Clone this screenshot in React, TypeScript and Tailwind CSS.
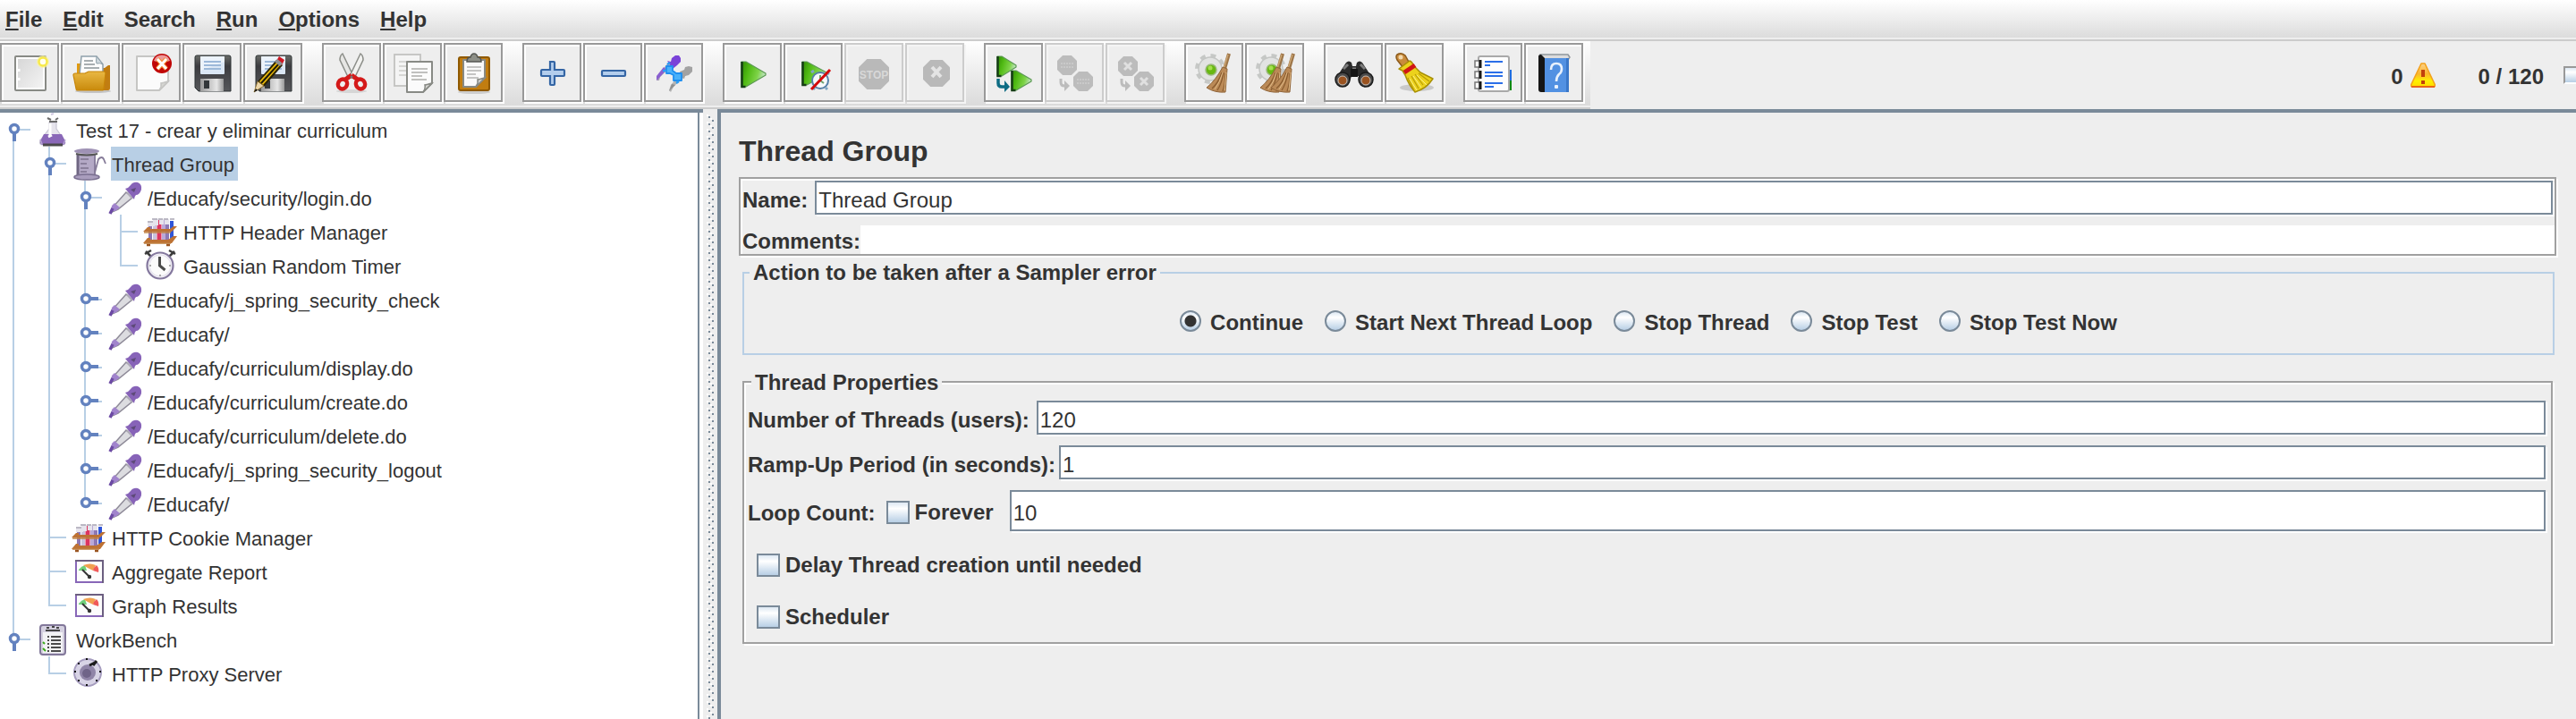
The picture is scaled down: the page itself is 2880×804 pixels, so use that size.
import React, { useState } from "react";

type Draw = () => React.ReactElement;

/* ---------- toolbar drawings, all on a 48 x 48 field ---------- */

function Page({ x, y, w, h, stroke = "#888a85", fill = "#fbfbfb" }: { x: number; y: number; w: number; h: number; stroke?: string; fill?: string }) {
  const r = x + w;
  const b = y + h;
  return (
    <g>
      <path d={`M${x} ${y}H${r}V${b - 10}L${r - 10} ${b}H${x}Z`} fill={fill} stroke={stroke} strokeWidth="2" strokeLinejoin="round" />
      <path d={`M${r} ${b - 10}Q${r - 7} ${b - 8} ${r - 8} ${b - 8}Q${r - 7} ${b - 4} ${r - 10} ${b}Z`} fill="#d6d6d2" stroke={stroke} strokeWidth="1.5" />
    </g>
  );
}

const NewIcon: Draw = () => (
  <g>
    <defs>
      <linearGradient id="paperGray" x1="0" y1="0" x2="1" y2="1">
        <stop offset="0" stopColor="#d4d4d4" />
        <stop offset="1" stopColor="#f6f6f6" />
      </linearGradient>
    </defs>
    <rect x="8" y="6" width="34" height="38" rx="1" fill="url(#paperGray)" stroke="#888a85" strokeWidth="2" />
    <path d="M10 8H40V42H10Z" fill="none" stroke="#fff" strokeWidth="2" />
    <path d="M12 20v3M12 30v3" stroke="#fff" strokeWidth="3" />
    <circle cx="39" cy="12" r="7" fill="#fbf4a0" opacity=".7" />
    <circle cx="39" cy="12" r="4.5" fill="#fffef0" stroke="#f7e94a" strokeWidth="2.5" />
  </g>
);

const OpenIcon: Draw = () => (
  <g>
    <defs>
      <linearGradient id="folderFront" x1="0" y1="0" x2="0" y2="1">
        <stop offset="0" stopColor="#e9b843" />
        <stop offset="1" stopColor="#c98a0c" />
      </linearGradient>
    </defs>
    <ellipse cx="27" cy="45" rx="20" ry="2" fill="#c4c4c4" />
    <path d="M9 14h5v5h26l4-3h2v26q0 2-2 2H10Z" fill="#c17d11" />
    <path d="M9 14h6v12H9z" fill="#e09a10" />
    <path d="M14 6H31L38 15V26H12Z" fill="#fcfcfc" stroke="#8fa0aa" strokeWidth="1.5" />
    <path d="M31 6q-1 6 0 8 4-1 7 1Z" fill="#cfd8de" stroke="#8fa0aa" />
    <path d="M17 11h10M17 15h12M17 19h17" stroke="#8c9498" strokeWidth="1.5" />
    <path d="M5 27q0-2 2-2h11l4-2h17q2 0 2 2l-2 17q0 2-2 2H10q-2 0-2-2Z" fill="url(#folderFront)" stroke="#c78509" strokeWidth="1.2" />
  </g>
);

const CloseIcon: Draw = () => (
  <g>
    <Page x={8} y={6} w={35} h={38} stroke="#c6c6c4" />
    <circle cx="36" cy="14" r="11" fill="#c00707" />
    <path d="M27 11a9.500 9.500 0 0 1 18 0q-9 3-18 0Z" fill="#ec9a9a" />
    <path d="M31 9l10 11M41 9L31 20" stroke="#f58a2c" strokeWidth="5" />
    <path d="M31 9l10 11M41 9L31 20" stroke="#fff" strokeWidth="3" />
  </g>
);

function Disk() {
  return (
    <g>
      <defs>
        <linearGradient id="diskBody" x1="0" y1="0" x2="0" y2="1">
          <stop offset="0" stopColor="#6a6c68" />
          <stop offset="0.300" stopColor="#3c3c40" />
          <stop offset="1" stopColor="#56575a" />
        </linearGradient>
        <linearGradient id="diskSlide" x1="0" y1="0" x2="1" y2="0">
          <stop offset="0" stopColor="#9a9a9a" />
          <stop offset="0.700" stopColor="#e6e6e6" />
          <stop offset="1" stopColor="#999" />
        </linearGradient>
      </defs>
      <path d="M7 5H43q2 0 2 2V45H9L5 41V7Q5 5 7 5Z" fill="url(#diskBody)" stroke="#2e3436" strokeWidth="1" />
      <rect x="11" y="6" width="27" height="20" rx="1" fill="#dbe7f5" />
      <path d="M11 6h27v6L11 22Z" fill="#f4f8fd" opacity=".7" />
      <path d="M15 12h19M15 16h19M15 20h19" stroke="#9db9d9" strokeWidth="1.800" />
      <rect x="11" y="31" width="26" height="14" fill="url(#diskSlide)" />
      <rect x="15" y="33" width="6" height="9" fill="#33373a" />
    </g>
  );
}

const SaveIcon: Draw = () => <Disk />;

const SaveAsIcon: Draw = () => (
  <g>
    <Disk />
    <path d="M7 34L28 10l7 6L14 40Z" fill="#2b2200" />
    <path d="M9 34L29 12l4 3L13 38Z" fill="#e9b90c" />
    <path d="M11 36L31 14" stroke="#1d1a08" strokeWidth="2" />
    <path d="M28 11l3-5 6 4-3 6Z" fill="#cf1722" />
    <path d="M26 12l3-3 6 5-3 3Z" fill="#8e9092" />
    <path d="M7 34l7 5-11 7Z" fill="#ecd6a8" stroke="#8a6a24" strokeWidth=".8" />
    <path d="M3 46l2-4 2 2Z" fill="#111" />
  </g>
);

const CutIcon: Draw = () => (
  <g>
    <ellipse cx="24" cy="45" rx="17" ry="2" fill="#d6d6d6" />
    <path d="M14 3q-3 2-3 7l10 21 5-3Z" fill="#e6e6e4" stroke="#8b8d88" strokeWidth="1.500" />
    <path d="M34 3q3 2 3 7L27 31l-5-3Z" fill="#f2f2f0" stroke="#8b8d88" strokeWidth="1.500" />
    <path d="M24 27l-7 5M24 27l7 5" stroke="#d41a1a" strokeWidth="5" />
    <ellipse cx="14" cy="37" rx="5" ry="5.500" fill="#eee" stroke="#d41a1a" strokeWidth="4.500" transform="rotate(25 14 37)" />
    <ellipse cx="34" cy="37" rx="5" ry="5.500" fill="#eee" stroke="#d41a1a" strokeWidth="4.500" transform="rotate(-25 34 37)" />
    <circle cx="24" cy="29" r="1.500" fill="#777" />
  </g>
);

const CopyIcon: Draw = () => (
  <g>
    <rect x="4" y="4" width="29" height="35" fill="#f4f4f4" stroke="#c2c2c0" strokeWidth="1.800" />
    <path d="M9 12h18M9 17h18M9 22h10M9 27h8" stroke="#d6d6d4" strokeWidth="1.800" />
    <Page x={18} y={12} w={28} h={34} />
    <path d="M23 20h18M23 24h18M23 28h12M23 32h17" stroke="#c0c0be" strokeWidth="1.800" />
  </g>
);

const PasteIcon: Draw = () => (
  <g>
    <ellipse cx="25" cy="46" rx="18" ry="2" fill="#cdcdcd" />
    <rect x="8" y="7" width="34" height="37" rx="2" fill="#c17d11" stroke="#8f5902" strokeWidth="2" />
    <Page x={13} y={10} w={24} h={30} fill="#fafafa" />
    <path d="M17 18h16M17 22h16M17 26h10M17 30h13" stroke="#b4b4b2" strokeWidth="1.600" />
    <path d="M17 12q0-5 4-5 1-4 4-4t4 4q4 0 4 5Z" fill="#8d8f87" stroke="#555753" strokeWidth="1.500" />
  </g>
);

const PlusIcon: Draw = () => (
  <path d="M22 12h4q1 0 1 1v8h10q1 0 1 1v5q0 1-1 1H27v9q0 1-1 1h-3q-1 0-1-1v-9H13q-1 0-1-1v-4q0-2 1-2h9Z" fill="#b3cdec" stroke="#3465a4" strokeWidth="2.200" />
);

const MinusIcon: Draw = () => <rect x="12" y="22" width="26" height="6" rx="1" fill="#b3cdec" stroke="#3465a4" strokeWidth="2.200" />;

const ToggleIcon: Draw = () => (
  <g>
    <path d="M6 28L19 12l4 4L9 29 8 33H5Z" fill="#a9a3b4" />
    <path d="M5 33V28l8-10 3 3-8 9Z" fill="#8a5fd0" />
    <path d="M17 11l4 1 1-4 4-3h4l2 3v4l-4 4-5 4Z" fill="#7a42d8" />
    <path d="M21 38L34 23l4 4L24 40l-3 6-2-2Z" fill="#b4b4b4" />
    <path d="M19 45l3-8 4 1Z" fill="#8f8f8f" />
    <path d="M31 23l5-2 1-3 4-1 4 1v5l-4 4-4 1-1 3-3-1Z" fill="#a2a2a2" />
    <path d="M16 17h7v5l4 3h6v8h-9v-6l-4-2h-4Z" fill="#49b1fa" stroke="#1f8ff0" strokeWidth="1.800" strokeLinejoin="round" />
    <path d="M12 22h4M17 15l3-2M30 34l-3 2" stroke="#2a9df5" strokeWidth="2.500" />
  </g>
);

function Triangle({ x, y, w, h }: { x: number; y: number; w: number; h: number }) {
  return (
    <g>
      <defs>
        <linearGradient id="playGreen" x1="0" y1="0" x2="1" y2="0.300">
          <stop offset="0" stopColor="#2f8a06" />
          <stop offset="0.350" stopColor="#4fb913" />
          <stop offset="0.750" stopColor="#7ed348" />
          <stop offset="1" stopColor="#b9e2b4" />
        </linearGradient>
      </defs>
      <path d={`M${x + 1} ${y + 1}H${x + 6}L${x + w} ${y + h / 2 - 1}V${y + h / 2 + 1}L${x + 6} ${y + h - 1}H${x + 1}Z`} fill="url(#playGreen)" stroke="#5c9a54" strokeWidth="1.200" strokeLinejoin="round" />
      <path d={`M${x + 1.500} ${y + 1}V${y + h - 1}h4`} fill="none" stroke="#163d16" strokeWidth="2.500" />
    </g>
  );
}

const StartIcon: Draw = () => <Triangle x={11} y={11} w={28} h={30} />;

const StartNoTimersIcon: Draw = () => (
  <g>
    <Triangle x={11} y={11} w={28} h={28} />
    <circle cx="32" cy="33" r="9" fill="#f6f9fb" stroke="#5580a8" strokeWidth="2" />
    <path d="M22 24l3-2M39 24l3 2M26 41l-2 2M38 41l2 2" stroke="#7fa6c4" strokeWidth="3" />
    <path d="M32 27v6l4 3" fill="none" stroke="#6ea06e" strokeWidth="2" />
    <path d="M22 43L43 21" stroke="#d40a0a" strokeWidth="3" />
  </g>
);

const octagon = (cx: number, cy: number, r: number) => {
  const k = r * 0.45;
  return `M${cx - k} ${cy - r}H${cx + k}L${cx + r} ${cy - k}V${cy + k}L${cx + k} ${cy + r}H${cx - k}L${cx - r} ${cy + k}V${cy - k}Z`;
};

const StopIcon: Draw = () => (
  <g>
    <path d={octagon(24, 26, 17)} fill="#b9b9b9" />
    <text x="24" y="31" textAnchor="middle" fontFamily="Liberation Sans, sans-serif" fontSize="12" fill="#d8d8d8">STOP</text>
  </g>
);

const ShutdownIcon: Draw = () => (
  <g>
    <path d={octagon(26, 25, 15)} fill="#b9b9b9" />
    <path d="M21 18l10 11M31 18L21 29" stroke="#e4e4e4" strokeWidth="4" />
  </g>
);

const StartAllIcon: Draw = () => (
  <g>
    <Triangle x={5} y={5} w={22} h={24} />
    <Triangle x={21} y={21} w={23} h={24} />
    <path d="M7 31v5q0 4 4 4h4" fill="none" stroke="#0e6c84" strokeWidth="3.500" />
    <path d="M14 33l6 7-6 6Z" fill="#0e6c84" />
  </g>
);

const GrayArrow = () => (
  <g>
    <path d="M9 31v4q0 4 4 4h2" fill="none" stroke="#bcbcbc" strokeWidth="3" />
    <path d="M13 33l6 6-6 6Z" fill="#bcbcbc" />
  </g>
);

const StopAllIcon: Draw = () => (
  <g>
    <path d={octagon(16, 16, 11)} fill="#bcbcbc" />
    <path d={octagon(34, 34, 11)} fill="#bcbcbc" />
    <path d="M9 14h14M9 18h14M27 32h14M27 36h14" stroke="#c9c9c9" strokeWidth="2" strokeDasharray="2 1" />
    <GrayArrow />
  </g>
);

const ShutdownAllIcon: Draw = () => (
  <g>
    <path d={octagon(16, 17, 11)} fill="#bcbcbc" />
    <path d={octagon(34, 34, 11)} fill="#bcbcbc" />
    <path d="M12 13l8 8M20 13l-8 8M30 30l8 8M38 30l-8 8" stroke="#e0e0e0" strokeWidth="3" />
    <GrayArrow />
  </g>
);

const Gear = () => (
  <g>
    <circle cx="20" cy="20" r="14" fill="none" stroke="#c6c8c6" strokeWidth="6" strokeDasharray="5.500 5.500" />
    <circle cx="20" cy="20" r="13" fill="#e2e3e2" stroke="#c4c6c4" strokeWidth="1.500" />
    <circle cx="21" cy="21" r="6" fill="#68b812" stroke="#9bb87c" strokeWidth="1.500" />
    <circle cx="20" cy="19" r="2.500" fill="#a5e04e" />
  </g>
);

function StrawBroom({ dx }: { dx: number }) {
  return (
    <g transform={`translate(${dx} 0)`}>
      <path d="M41 3L36 20" stroke="#9c7447" strokeWidth="4" />
      <path d="M40 4L35 20" stroke="#caa472" strokeWidth="1.500" />
      <path d="M34 18l5 2-2 26q-12 1-21-5 10-8 18-23Z" fill="#bb8a57" stroke="#8f6439" strokeWidth="1" />
      <path d="M33 24q-4 12-11 18M35 24q-2 12-7 20M37 25q0 12-3 20" fill="none" stroke="#8a5c2f" strokeWidth="1.300" />
      <path d="M34 24q-3 11-9 19M38 24q-1 10-2 20" fill="none" stroke="#e0bb88" strokeWidth="1" />
    </g>
  );
}

const ClearIcon: Draw = () => (
  <g>
    <Gear />
    <StrawBroom dx={0} />
  </g>
);

const ClearAllIcon: Draw = () => (
  <g>
    <Gear />
    <StrawBroom dx={-8} />
    <StrawBroom dx={4} />
  </g>
);

const SearchIcon: Draw = () => (
  <g>
    <path d="M16 13q3-3 6 0l1 4h4l1-4q3-3 6 0l6 9 6 11q0 6-6 6t-8-5l-2-6h-8l-2 6q-2 5-8 5t-8-6l6-11Z" fill="#2c2c2c" />
    <path d="M13 20l5-5M37 20l-5-5M23 20h4" stroke="#7c7c7c" strokeWidth="3" />
    <circle cx="12" cy="32" r="8" fill="#4a4a4a" stroke="#1a1a1a" strokeWidth="1.500" />
    <circle cx="38" cy="32" r="8" fill="#4a4a4a" stroke="#1a1a1a" strokeWidth="1.500" />
    <circle cx="12" cy="33" r="5" fill="#9a5320" stroke="#c9c0b8" strokeWidth="1" />
    <circle cx="38" cy="33" r="5" fill="#9a5320" stroke="#c9c0b8" strokeWidth="1" />
    <rect x="21" y="20" width="8" height="9" fill="#161616" />
  </g>
);

const ResetSearchIcon: Draw = () => (
  <g>
    <ellipse cx="27" cy="41" rx="19" ry="4" fill="#c9c9c9" />
    <path d="M5 4q5-3 9 1l5 9-7 5L5 10q-2-4 0-6Z" fill="#c98b3c" stroke="#8b5a1c" strokeWidth="1.500" />
    <circle cx="9" cy="7" r="2.500" fill="#f2d9ae" />
    <path d="M7 20L19 11q3 1 4 5l8 8 14 7Q38 42 25 46 18 38 14 27l-3-5Z" fill="#ecd21c" stroke="#a89005" strokeWidth="1.500" strokeLinejoin="round" />
    <path d="M17 30l7 14M21 28l8 14M25 26l9 12M29 25l12 9" stroke="#b89c08" strokeWidth="1.200" />
    <path d="M19 31l8 13M23 28l9 13M27 27l11 11" stroke="#fbf08a" strokeWidth="1" />
    <path d="M13 24L25 16" stroke="#d01616" strokeWidth="5" />
  </g>
);

const FunctionHelperIcon: Draw = () => (
  <g>
    <rect x="39" y="21" width="6" height="12" fill="#1f6ee0" />
    <rect x="39" y="33" width="6" height="11" fill="#0f8a12" />
    <rect x="8" y="6" width="34" height="39" rx="2" fill="#fdfdfd" stroke="#a9a9a9" strokeWidth="2" />
    <path d="M4 11h5v7H4zM4 23h5v7H4zM4 35h5v7H4z" fill="#fff" stroke="#777" strokeWidth="1.500" />
    <path d="M10 10v9M10 22v9M10 34v9" stroke="#1a1a1a" strokeWidth="3" />
    <path d="M15 12h20M15 24h20M15 28h20M15 36h20" stroke="#2a6ee8" strokeWidth="2.200" />
    <path d="M15 16h6M15 40h10" stroke="#2a6ee8" strokeWidth="2" />
  </g>
);

const HelpIcon: Draw = () => (
  <g>
    <path d="M9 4H40l2 3-2 3H9Z" fill="#dcdcdc" stroke="#8f969c" strokeWidth="1.500" />
    <rect x="14" y="8" width="27" height="38" fill="#5291e2" />
    <rect x="38" y="8" width="3" height="38" fill="#3a77c8" />
    <path d="M7 6q0-2 3-2l4 4v38H10q-3 0-3-3Z" fill="#161616" />
    <path d="M21 21q0-7 6-7t6 6q0 4-3 6-3 3-3 8" fill="none" stroke="#e8f1fc" strokeWidth="2.600" />
    <rect x="25" y="38" width="4" height="4" rx="1" fill="#e8f1fc" />
  </g>
);

const toolGroups: { name: string; draw: Draw; disabled?: boolean }[][] = [
  [
    { name: "New", draw: NewIcon },
    { name: "Open", draw: OpenIcon },
    { name: "Close", draw: CloseIcon },
    { name: "Save", draw: SaveIcon },
    { name: "Save as", draw: SaveAsIcon },
  ],
  [
    { name: "Cut", draw: CutIcon },
    { name: "Copy", draw: CopyIcon },
    { name: "Paste", draw: PasteIcon },
  ],
  [
    { name: "Expand all", draw: PlusIcon },
    { name: "Collapse all", draw: MinusIcon },
    { name: "Toggle", draw: ToggleIcon },
  ],
  [
    { name: "Start", draw: StartIcon },
    { name: "Start no pauses", draw: StartNoTimersIcon },
    { name: "Stop", draw: StopIcon, disabled: true },
    { name: "Shutdown", draw: ShutdownIcon, disabled: true },
  ],
  [
    { name: "Remote start all", draw: StartAllIcon },
    { name: "Remote stop all", draw: StopAllIcon, disabled: true },
    { name: "Remote shutdown all", draw: ShutdownAllIcon, disabled: true },
  ],
  [
    { name: "Clear", draw: ClearIcon },
    { name: "Clear all", draw: ClearAllIcon },
  ],
  [
    { name: "Find", draw: SearchIcon },
    { name: "Reset search", draw: ResetSearchIcon },
  ],
  [
    { name: "Function helper", draw: FunctionHelperIcon },
    { name: "Help", draw: HelpIcon },
  ],
];

/* ---------- tree drawings, all on a 40 x 38 field ---------- */

const Flask: Draw = () => (
  <g>
    <path d="M17 2l3-1" stroke="#cfc8e0" strokeWidth="2" />
    <path d="M15 11h8v7l9 13q2 5-2 5H8q-5 0-3-5l10-13Z" fill="#e6e4ec" stroke="#c9c6d4" strokeWidth="1.200" />
    <path d="M9 24h20l4 8q1 3-3 4H8q-4-1-3-4Z" fill="#8a68b8" />
    <path d="M16 12v14M18 25l-4 2" stroke="#fff" strokeWidth="3" />
    <path d="M8 36h22" stroke="#4a4a4a" strokeWidth="3" />
    <path d="M13 6l4 2M25 6l-3 2M15 10h9" stroke="#6a6a6a" strokeWidth="2" />
    <path d="M5 30l2 5M33 30l-2 5" stroke="#b4a4d0" strokeWidth="1.500" />
  </g>
);

const Spool: Draw = () => (
  <g>
    <rect x="6" y="8" width="20" height="25" fill="#b4a9c6" />
    <path d="M7 9v23" stroke="#6f6682" strokeWidth="3" />
    <path d="M10 14h9M10 19h7M10 24h9M10 28h7" stroke="#7d738f" strokeWidth="1.500" />
    <path d="M26 9v23" stroke="#8a7f9e" strokeWidth="2" />
    <ellipse cx="17" cy="5" rx="14" ry="3" fill="#9f92b5" />
    <path d="M5 8q12 3 24 0" fill="none" stroke="#555" strokeWidth="2" />
    <ellipse cx="17" cy="34" rx="14" ry="3" fill="#a99dbd" stroke="#7a6f90" strokeWidth="1.500" />
    <path d="M26 29l4-15q4-4 6 0l2 5" fill="none" stroke="#857a98" strokeWidth="1.800" />
  </g>
);

const Pipette: Draw = () => (
  <g>
    <path d="M5 31L21 13l7 6L12 32l-7 3Z" fill="#dcdce0" stroke="#8e8a98" strokeWidth="1.500" />
    <path d="M4 34l1-6 3-3 6 5-5 4Z" fill="#a184cc" />
    <path d="M3 37l3-6" stroke="#6c4aa4" strokeWidth="3.500" />
    <path d="M22 13l6 7" stroke="#aeaab8" strokeWidth="2" />
    <path d="M20 9q4-1 6-4 3-4 8-3 5 2 4 8-2 6-6 6-2 2-2 5l-4-5Z" fill="#8763b8" />
    <path d="M26 10l6-2-2 5Z" fill="#5d4a78" />
  </g>
);

const Rack: Draw = () => (
  <g>
    <path d="M8 8v21" stroke="#8d78b4" strokeWidth="4" />
    <path d="M13 7v21" stroke="#c9c2dc" strokeWidth="4" />
    <path d="M18 6v23" stroke="#dc3560" strokeWidth="5" />
    <path d="M23 6v22" stroke="#b9a9d8" strokeWidth="4" />
    <path d="M27 7v21" stroke="#8d78b4" strokeWidth="4" />
    <path d="M32 7v20" stroke="#2f55d8" strokeWidth="4" />
    <path d="M5 8h8v5H5zM11 5h6v7h-6zM18 5h5v6h-5zM24 5h5v6h-5z" fill="#e6e4ec" />
    <path d="M5 8h6M10 5h6M17 5h5M23 5h5M30 5h5" stroke="#a9a5b4" strokeWidth="1.500" />
    <path d="M0 19l5-5h3v2h22l4-3h4l-6 6Z" fill="#bd7234" />
    <path d="M0 32l5-6h3v2h20l6-4h4l-6 8Z" fill="#bd7234" />
    <path d="M1 20h30M1 32h30" stroke="#c08040" strokeWidth="1.500" />
    <path d="M4 34h4M26 34h4" stroke="#9a5520" strokeWidth="2.500" />
  </g>
);

const Clock: Draw = () => (
  <g>
    <path d="M2 6l7-4M3 3l7 7M36 6l-7-4M35 3l-7 7" stroke="#3c3c3c" strokeWidth="2.500" />
    <circle cx="19" cy="19" r="14.500" fill="#fbfbfb" stroke="#84789e" strokeWidth="2.200" />
    <circle cx="19" cy="19" r="12" fill="none" stroke="#e6e3ee" strokeWidth="1.500" />
    <path d="M18.500 9v10l6 5" fill="none" stroke="#4a4a4a" strokeWidth="3" />
    <path d="M19 31v-2M7 19h2M31 19h-2" stroke="#aaa" strokeWidth="2" />
  </g>
);

const Gauge: Draw = () => (
  <g>
    <rect x="5" y="7" width="30" height="24" fill="#fcfcfc" stroke="#8867b8" strokeWidth="2" />
    <path d="M4 7h32M35 6v26" stroke="#6c5f80" strokeWidth="2" />
    <path d="M8 17q3-4 7-5l2 6H8Z" fill="#6fcf7a" />
    <path d="M13 12q8-3 14 0l-3 6-6-3Z" fill="#f1a050" />
    <path d="M25 15l3-3q3 3 2 8l-6-2Z" fill="#f05a5a" />
    <path d="M12 17l8 8" stroke="#333" strokeWidth="2" />
    <circle cx="20" cy="25" r="2.200" fill="#333" />
  </g>
);

const Bench: Draw = () => (
  <g>
    <rect x="5" y="3" width="28" height="33" rx="3" fill="#d5d1e0" stroke="#82789a" strokeWidth="2" />
    <path d="M8 11h22v23H8Z" fill="#f3f3f5" />
    <path d="M12 6h3M18 5h3M23 6h3M11 9h16" stroke="#444" strokeWidth="2.200" />
    <path d="M13 16h15M13 20h15M13 24h15M13 28h15M13 32h15" stroke="#4a4a4a" strokeWidth="1.800" strokeDasharray="2 2 12 2" />
    <path d="M8 22l2 2M8 29l3 3" stroke="#3cab1c" strokeWidth="2" />
  </g>
);

const Proxy: Draw = () => (
  <g>
    <circle cx="18" cy="18" r="15" fill="#d8d4e6" stroke="#a59cbe" strokeWidth="2" />
    <circle cx="18" cy="18" r="9" fill="#9085a8" />
    <circle cx="17" cy="19" r="5" fill="#6f6488" />
    <path d="M20 10l8-4M24 10l4-5" stroke="#1c1c1c" strokeWidth="3" />
    <path d="M16 3h2M3 17h2M31 17h2M16 32h2M7 8h2M7 27h2M27 27h2" stroke="#111" strokeWidth="2.200" />
  </g>
);

type Guide = "none" | "line" | "tee" | "end" | "openFirst" | "open" | "openLast" | "closed" | "closedLast";

function GuideCell({ kind }: { kind: Guide }) {
  const up = kind !== "none" && kind !== "openFirst";
  const down = kind === "line" || kind === "tee" || kind === "open" || kind === "openFirst" || kind === "closed";
  const across = kind !== "none" && kind !== "line";
  const open = kind === "open" || kind === "openFirst" || kind === "openLast";
  const closed = kind === "closed" || kind === "closedLast";
  const art = (
    <svg className="block h-[38px] w-10" viewBox="0 0 40 38" aria-hidden="true">
      {up && <rect x="14" y="0" width="2" height="20" fill="#b8cfe5" />}
      {down && <rect x="14" y="18" width="2" height="20" fill="#b8cfe5" />}
      {across && <rect x="15" y="18" width="19" height="2" fill="#b8cfe5" />}
      {open && <rect x="14" y="22" width="4" height="10" fill="#6382bf" />}
      {closed && <rect x="20" y="16" width="10" height="4" fill="#6382bf" />}
      {(open || closed) && <circle cx="16" cy="18" r="4.500" fill="#fff" stroke="#6382bf" strokeWidth="3.500" />}
    </svg>
  );
  if (open || closed) {
    return (
      <button type="button" aria-label={open ? "Collapse" : "Expand"} className="shrink-0">
        {art}
      </button>
    );
  }
  return <span className="shrink-0">{art}</span>;
}

const treeRows: { text: string; icon: Draw; guides: Guide[] }[] = [
  { text: "Test 17 - crear y eliminar curriculum", icon: Flask, guides: ["openFirst"] },
  { text: "Thread Group", icon: Spool, guides: ["line", "open"] },
  { text: "/Educafy/security/login.do", icon: Pipette, guides: ["line", "line", "open"] },
  { text: "HTTP Header Manager", icon: Rack, guides: ["line", "line", "line", "tee"] },
  { text: "Gaussian Random Timer", icon: Clock, guides: ["line", "line", "line", "end"] },
  { text: "/Educafy/j_spring_security_check", icon: Pipette, guides: ["line", "line", "closed"] },
  { text: "/Educafy/", icon: Pipette, guides: ["line", "line", "closed"] },
  { text: "/Educafy/curriculum/display.do", icon: Pipette, guides: ["line", "line", "closed"] },
  { text: "/Educafy/curriculum/create.do", icon: Pipette, guides: ["line", "line", "closed"] },
  { text: "/Educafy/curriculum/delete.do", icon: Pipette, guides: ["line", "line", "closed"] },
  { text: "/Educafy/j_spring_security_logout", icon: Pipette, guides: ["line", "line", "closed"] },
  { text: "/Educafy/", icon: Pipette, guides: ["line", "line", "closedLast"] },
  { text: "HTTP Cookie Manager", icon: Rack, guides: ["line", "tee"] },
  { text: "Aggregate Report", icon: Gauge, guides: ["line", "tee"] },
  { text: "Graph Results", icon: Gauge, guides: ["line", "end"] },
  { text: "WorkBench", icon: Bench, guides: ["openLast"] },
  { text: "HTTP Proxy Server", icon: Proxy, guides: ["none", "end"] },
];

const menus: [string, string][] = [
  ["F", "ile"],
  ["E", "dit"],
  ["", "Search"],
  ["R", "un"],
  ["O", "ptions"],
  ["H", "elp"],
];

const etched = "border-2 border-[#a0a0a0] shadow-[2px_2px_0_0_#fff,inset_2px_2px_0_0_#fff]";
const field = "min-w-0 flex-1 border-2 border-[#7a8a99] bg-white pl-0.5 pt-1.5 text-2xl leading-7 font-normal text-[#333] shadow-[2px_2px_0_0_#fff] outline-none";
const tick = "size-[26px] shrink-0 appearance-none border-2 border-[#7a8a99] bg-linear-to-b from-[#dde8f3] via-white via-30% to-[#b8cfe5]";
const round =
  "size-6 shrink-0 appearance-none rounded-full border-2 border-[#7a8a99] bg-linear-to-b from-[#dde8f3] via-white via-30% to-[#b8cfe5] checked:bg-[radial-gradient(circle,#333_0_6px,transparent_7px),linear-gradient(#dde8f3,#fff_30%,#b8cfe5)]";

const actions = ["Continue", "Start Next Thread Loop", "Stop Thread", "Stop Test", "Stop Test Now"];

export default function App() {
  const [action, setAction] = useState("Continue");
  const [selected, setSelected] = useState(1);

  return (
    <div className="flex min-h-screen flex-col overflow-hidden bg-[#eee] font-['Liberation_Sans',Arial,sans-serif] text-2xl leading-7 font-bold text-[#333]">
      <nav className="flex h-[46px] items-center gap-[23px] border-b-2 border-[#ccc] bg-linear-to-b from-white to-[#dadada] pl-1.5 shadow-[inset_0_-2px_0_0_#eee]">
        {menus.map(([key, rest]) => (
          <button key={rest} type="button" className="leading-7">
            <span className="underline decoration-2 underline-offset-2">{key}</span>
            {rest}
          </button>
        ))}
      </nav>

      <header className="flex items-stretch justify-between">
        <div role="toolbar" className="flex h-[76px] items-start gap-[18px] border-b-2 border-[#ccc] bg-linear-to-b from-white to-[#dadada] pt-0.5 pr-1 shadow-[inset_0_-2px_0_0_#eee]">
          {toolGroups.map((group) => (
            <div key={group[0].name} className="flex gap-0.5 pr-1">
              {group.map((tool) => (
                <button
                  key={tool.name}
                  type="button"
                  aria-label={tool.name}
                  disabled={tool.disabled}
                  className="flex size-[66px] items-center justify-center border-2 border-[#999] bg-[#eee] shadow-[2px_2px_0_0_#fff,inset_2px_2px_0_0_#fff] disabled:border-[#ccc] disabled:shadow-[2px_2px_0_0_#f4f4f4,inset_2px_2px_0_0_#f4f4f4]"
                >
                  <svg className="size-12" viewBox="0 0 48 48" aria-hidden="true">
                    <tool.draw />
                  </svg>
                </button>
              ))}
            </div>
          ))}
        </div>
        <div className="flex items-center">
          <span className="pt-1">0</span>
          <svg className="ml-2 size-7" viewBox="0 0 28 28" aria-hidden="true">
            <defs>
              <linearGradient id="warn" x1="0" y1="0" x2="0" y2="1">
                <stop offset="0" stopColor="#fbd08a" />
                <stop offset="0.450" stopColor="#fbb62c" />
                <stop offset="0.750" stopColor="#fff000" />
                <stop offset="1" stopColor="#ffd800" />
              </linearGradient>
            </defs>
            <path d="M12 1h4L27 24q1 3-1 3H2q-2 0-1-3Z" fill="url(#warn)" stroke="#f3a11c" strokeWidth="1.600" strokeLinejoin="round" />
            <path d="M1 27h26" stroke="#e8641a" strokeWidth="2" />
            <path d="M14 8v8M14 20v4" stroke="#c2410c" strokeWidth="4" />
          </svg>
          <span className="ml-12 pt-1">0 / 120</span>
          <button type="button" aria-label="Remote status" className="ml-[22px] h-5 w-3.5 border-t-2 border-b-2 border-l-2 border-t-[#999] border-b-white border-l-[#999] bg-linear-to-b from-[#dde8f3] via-white via-30% to-[#b8cfe5]" />
        </div>
      </header>

      <div className="flex flex-1 items-stretch">
        <aside className="w-[786px] shrink-0 border-t-4 border-[#7a8a99] bg-white pr-1">
          <ul role="tree" className="h-full border-r-2 border-[#7a8a99] text-[22px] font-normal">
            {treeRows.map((row, i) => (
              <li key={i} role="treeitem" aria-level={row.guides.length} aria-selected={selected === i} className="flex h-[38px]" onClick={() => setSelected(i)}>
                {row.guides.map((g, k) => (
                  <GuideCell key={k} kind={g} />
                ))}
                <svg className="h-[38px] w-10 shrink-0" viewBox="0 0 40 38" aria-hidden="true">
                  <row.icon />
                </svg>
                <span className={selected === i ? "ml-1 bg-[#b8cfe5] pt-1 pr-1 pl-px leading-[34px]" : "ml-1 pt-1 pr-1 pl-px leading-[34px]"}>{row.text}</span>
              </li>
            ))}
          </ul>
        </aside>

        <div role="separator" className="flex w-4 shrink-0 px-1 pt-1.5">
          <svg className="min-h-full w-2" aria-hidden="true">
            <defs>
              <pattern id="bumps" width="8" height="8" patternUnits="userSpaceOnUse">
                <path d="M0 0h2v2H0zM4 4h2v2H4z" fill="#fff" />
                <path d="M2 2h2v2H2zM6 6h2v2H6z" fill="#7a8a99" />
              </pattern>
            </defs>
            <rect width="8" height="100%" fill="url(#bumps)" />
          </svg>
        </div>

        <main className="min-w-0 flex-1 border-t-4 border-l-4 border-[#7a8a99] pt-6 pr-[22px] pb-10 pl-5">
          <h1 className="text-[32px] leading-[38px]">Thread Group</h1>

          <div className={`mt-2.5 px-0.5 pt-0.5 ${etched}`}>
            <div className="flex h-[38px]">
              <label htmlFor="name" className="pt-2 pr-2">Name:</label>
              <input id="name" className={field} defaultValue="Thread Group" />
            </div>
            <div className="mt-3 flex h-8">
              <label htmlFor="comments" className="pt-1">Comments:</label>
              <input id="comments" className="-mr-0.5 min-w-0 flex-1 bg-white text-2xl font-normal outline-none" />
            </div>
          </div>

          <fieldset className="mt-[5px] mr-0.5 ml-1 border-2 border-[#b8cfe5]">
            <legend className="ml-1.5 px-1">Action to be taken after a Sampler error</legend>
            <div className="flex justify-center gap-6 pt-6 pb-5">
              {actions.map((a) => (
                <label key={a} className="flex items-center gap-2.5">
                  <input type="radio" name="action" className={round} checked={action === a} onChange={() => setAction(a)} />
                  <span className="pt-1">{a}</span>
                </label>
              ))}
            </div>
          </fieldset>

          <fieldset className={`mt-[15px] mr-1 ml-1 pr-1.5 pl-1 ${etched}`}>
            <legend className="ml-1 bg-[#eee] px-1 pt-0.5">Thread Properties</legend>
            <div className="mt-1.5 flex h-[38px]">
              <label htmlFor="threads" className="pt-2 pr-2">Number of Threads (users):</label>
              <input id="threads" className={field} defaultValue="120" />
            </div>
            <div className="mt-3 flex h-[38px]">
              <label htmlFor="ramp" className="pt-2 pr-1">Ramp-Up Period (in seconds):</label>
              <input id="ramp" className={field} defaultValue="1" />
            </div>
            <div className="mt-3 flex h-[46px] items-stretch">
              <label htmlFor="loops" className="pt-3 pr-3">Loop Count:</label>
              <label className="flex items-center gap-1.5 pt-1 pr-[18px]">
                <input type="checkbox" className={tick} />
                <span>Forever</span>
              </label>
              <input id="loops" className={field} defaultValue="10" />
            </div>
            <div className="mt-6 flex flex-col items-start gap-[30px] pb-3.5 pl-2.5">
              <label className="flex items-center gap-1.5">
                <input type="checkbox" className={tick} />
                <span>Delay Thread creation until needed</span>
              </label>
              <label className="flex items-center gap-1.5">
                <input type="checkbox" className={tick} />
                <span>Scheduler</span>
              </label>
            </div>
          </fieldset>
        </main>
      </div>
    </div>
  );
}
